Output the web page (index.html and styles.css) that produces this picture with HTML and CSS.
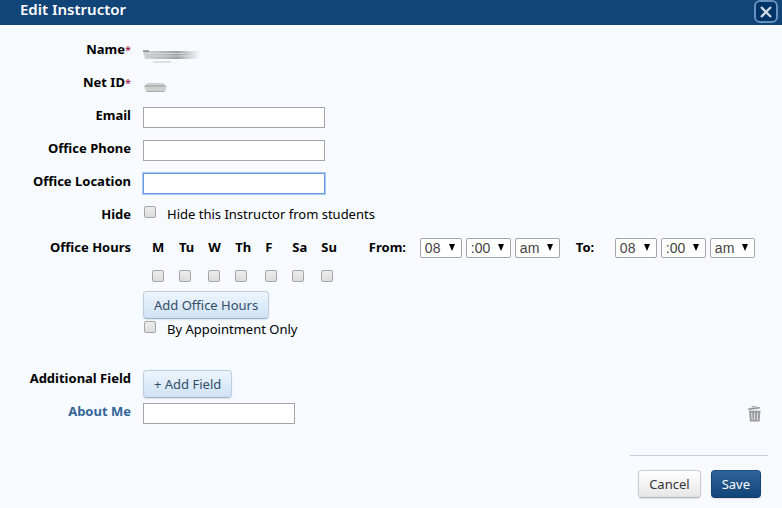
FILE: index.html
```html
<!DOCTYPE html>
<html lang="en">
	<head>
		<meta charset="UTF-8" />
		<meta name="viewport" content="width=device-width, initial-scale=1.0" />
		<title>Edit Instructor</title>
		<link rel="stylesheet" href="styles.css">
	</head>
	<body>
		<header class="title-bar">
			<h1>Edit Instructor</h1>
			<button type="button" class="close-btn" aria-label="Close">
				<svg width="12" height="12" viewBox="0 0 12 12">
					<path d="M1 1 L11 11 M11 1 L1 11" stroke="#ccd8e2" stroke-width="2.4" fill="none" />
				</svg>
			</button>
		</header>

		<form class="instructor-form">
			<div class="row">
				<div class="label">Name<span class="required">*</span></div>
				<div class="field">
					<svg class="redacted" width="66" height="16" viewBox="0 0 66 16" aria-hidden="true">
						<defs>
							<linearGradient id="fade" gradientUnits="userSpaceOnUse" x1="0" x2="58">
								<stop offset="0" stop-color="#bbb" stop-opacity="0.6" />
								<stop offset="0.6" stop-color="#888" stop-opacity="0.8" />
								<stop offset="1" stop-color="#aaa" stop-opacity="0" />
							</linearGradient>
							<filter id="smudge" x="-10%" y="-30%" width="120%" height="160%">
								<feGaussianBlur stdDeviation="0.5" />
							</filter>
						</defs>
						<g filter="url(#smudge)">
							<path d="M0 2 H58 L54 10 H2 Z" fill="url(#fade)" />
							<path d="M4 4.500 H40 M10 7 H52" stroke="#ddd" stroke-width="0.8" />
							<path d="M10 13 H28" stroke="#c4c4c4" stroke-width="1" />
						</g>
						<path d="M0 2 H6" stroke="#555" stroke-width="1" />
					</svg>
				</div>
			</div>

			<div class="row">
				<div class="label">Net ID<span class="required">*</span></div>
				<div class="field">
					<svg class="redacted" width="66" height="16" viewBox="0 0 66 16" aria-hidden="true">
						<g filter="url(#smudge)">
							<path d="M5 1 H20 L24 4 L22 10 H3 L1 4 Z" fill="#ced0d0" />
							<path d="M2 4 H22" stroke="#999" stroke-width="1" />
							<path d="M4 9.500 H21" stroke="#aaa" stroke-width="1" />
						</g>
					</svg>
				</div>
			</div>

			<div class="row">
				<label class="label" for="email">Email</label>
				<div class="field"><input type="text" id="email" class="text-input" /></div>
			</div>

			<div class="row">
				<label class="label" for="phone">Office Phone</label>
				<div class="field"><input type="text" id="phone" class="text-input" /></div>
			</div>

			<div class="row">
				<label class="label" for="location">Office Location</label>
				<div class="field"><input type="text" id="location" class="text-input active" /></div>
			</div>

			<div class="row">
				<div class="label">Hide</div>
				<div class="field check-field">
					<input type="checkbox" id="hide" class="checkbox" />
					<label for="hide">Hide this Instructor from students</label>
				</div>
			</div>

			<div class="row">
				<div class="label">Office Hours</div>
				<div class="field">
					<div class="hours">
						<table class="days">
							<tr>
								<th id="mon">M</th>
								<th id="tue">Tu</th>
								<th id="wed">W</th>
								<th id="thu">Th</th>
								<th id="fri">F</th>
								<th id="sat">Sa</th>
								<th id="sun">Su</th>
							</tr>
							<tr>
								<td><input type="checkbox" class="checkbox" aria-labelledby="mon" /></td>
								<td><input type="checkbox" class="checkbox" aria-labelledby="tue" /></td>
								<td><input type="checkbox" class="checkbox" aria-labelledby="wed" /></td>
								<td><input type="checkbox" class="checkbox" aria-labelledby="thu" /></td>
								<td><input type="checkbox" class="checkbox" aria-labelledby="fri" /></td>
								<td><input type="checkbox" class="checkbox" aria-labelledby="sat" /></td>
								<td><input type="checkbox" class="checkbox" aria-labelledby="sun" /></td>
							</tr>
						</table>

						<div class="time">
							<label class="time-label" for="from-hour">From:</label>
							<select id="from-hour" class="select hour"><option>08</option></select>
							<select class="select" aria-label="From minutes"><option>:00</option></select>
							<select class="select" aria-label="From am or pm"><option>am</option><option>pm</option></select>
						</div>

						<div class="time">
							<label class="time-label to" for="to-hour">To:</label>
							<select id="to-hour" class="select hour"><option>08</option></select>
							<select class="select" aria-label="To minutes"><option>:00</option></select>
							<select class="select" aria-label="To am or pm"><option>am</option><option>pm</option></select>
						</div>
					</div>

					<button type="button" class="btn btn-add">Add Office Hours</button>
					<div class="check-field appointment">
						<input type="checkbox" id="appointment" class="checkbox" />
						<label for="appointment">By Appointment Only</label>
					</div>
				</div>
			</div>

			<div class="row additional">
				<div class="label">Additional Field</div>
				<div class="field"><button type="button" class="btn btn-add">+ Add Field</button></div>
			</div>

			<div class="row">
				<label class="label custom" for="about">About Me</label>
				<div class="field custom-field">
					<input type="text" id="about" class="text-input short" />
					<button type="button" class="trash-btn" aria-label="Delete field">
						<svg width="13" height="16" viewBox="0 0 13 16">
							<path d="M0 2.500 L11.500 0.800 L12 2.500 L0.300 4.200 Z" fill="#999" />
							<path d="M4 1.800 L4.300 0.600 L7.500 0.200 L8 1.200" stroke="#999" fill="none" />
							<path d="M1 4.800 H12.500 L11.500 15.500 H2 Z" fill="#999" />
							<path d="M3.700 6.500 L4.200 14 M6.700 6.500 V14 M9.800 6.500 L9.300 14" stroke="#e4e8ec" stroke-width="1" />
						</svg>
					</button>
				</div>
			</div>

			<div class="actions">
				<button type="button" class="btn btn-cancel">Cancel</button>
				<button type="submit" class="btn btn-save">Save</button>
			</div>
		</form>
	</body>
</html>
```
FILE: styles.css
```css
* {
	box-sizing: border-box;
}

body {
	margin: 0;
	background-color: #f7fbff;
	color: #000;
	font-family: 'Noto Sans', 'Open Sans', sans-serif;
	font-size: 13px;
	line-height: 18px;
}

button,
input {
	font-family: inherit;
	font-size: inherit;
	line-height: inherit;
}

.title-bar {
	display: flex;
	justify-content: space-between;
	height: 25px;
	padding: 0 4px 0 20px;
	background-color: #114477;
}

h1 {
	margin: 0;
	color: #fff;
	font-size: 15px;
	font-weight: 600;
	line-height: 18px;
}

.close-btn {
	display: flex;
	align-items: center;
	justify-content: center;
	width: 24px;
	height: 23px;
	padding: 0;
	background-color: #003366;
	border: 2px solid #6690bd;
	border-radius: 6px;
	cursor: pointer;
}

.instructor-form {
	padding: 15px 14px 10px 0;
}

.row {
	display: flex;
	gap: 12px;
	min-height: 33px;
}

.label {
	flex: 0 0 131px;
	text-align: right;
	font-weight: 700;
}

.label.custom {
	color: #336699;
}

.required {
	color: #990033;
	font-size: 11px;
	font-weight: 400;
}

.field {
	flex: 1;
}

.redacted {
	display: block;
	margin-top: 9px;
}

.text-input {
	display: block;
	width: 182px;
	height: 21px;
	margin: 1px 0 0;
	padding: 0 4px;
	background-color: #fff;
	border: 1px solid #a5a5a5;
}

.text-input.short {
	width: 152px;
}

.text-input.active,
.text-input:focus {
	border-color: #6b9ae0;
	outline: 1px solid #a9c8f4;
}

.check-field {
	display: flex;
	gap: 10px;
}

.checkbox {
	appearance: none;
	flex: none;
	display: block;
	width: 12px;
	height: 12px;
	margin: 1px;
	background: linear-gradient(#ededed, #dcdcdc);
	border: 1px solid #a5a5a5;
	border-radius: 2px;
}

.checkbox:checked {
	background: #336699;
}

/* Office hours */
.hours {
	display: flex;
	align-items: flex-start;
	flex-wrap: wrap;
	gap: 16px;
}

.days {
	margin-left: 8px;
	border-collapse: collapse;
}

.days th,
.days td {
	padding: 0 13px 0 0;
	text-align: left;
	font-weight: 700;
}

.days th {
	height: 31px;
	padding-left: 1px;
	vertical-align: top;
}

.days td {
	height: 22px;
	vertical-align: top;
}

.time {
	display: flex;
	gap: 4px;
}

.time-label {
	width: 47px;
	margin-left: 3px;
	font-weight: 700;
}

.time-label.to {
	width: 35px;
	margin-left: 0;
}

.select {
	appearance: none;
	width: 45px;
	height: 20px;
	padding: 0 4px;
	background: #fff url("data:image/svg+xml,%3Csvg xmlns='http://www.w3.org/2000/svg' width='6' height='7'%3E%3Cpath d='M0 0H6L3 7Z'/%3E%3C/svg%3E") no-repeat right 6px top 5px;
	border: 1px solid #a5a5a5;
	border-radius: 2px;
	color: #444;
	font-family: 'Liberation Sans', Arial, sans-serif;
	font-size: 14px;
}

.select.hour {
	width: 42px;
}

/* Buttons */
.btn {
	display: block;
	height: 28px;
	padding: 0 10px;
	border: 1px solid;
	border-radius: 4px;
	box-shadow: 0 1px 2px rgba(0, 0, 0, 0.1);
	cursor: pointer;
}

.btn-add {
	background: linear-gradient(#edf5fd, #cfe2f5);
	border-color: #bccddc #bccddc #9fb4c8;
	color: #334d66;
}

.btn-cancel {
	background: linear-gradient(#fff, #e6e6e6);
	border-color: #ccc #ccc #b3b3b3;
	color: #333;
}

.btn-save {
	background: linear-gradient(#306398, #114477);
	border-color: #1d4f82 #114477 #0d3a66;
	color: #fff;
}

.appointment {
	margin-top: 1px;
}

.additional {
	margin-top: 31px;
}

.additional .btn {
	margin-top: 1px;
}

.custom-field {
	display: flex;
	align-items: flex-start;
	justify-content: space-between;
}

.trash-btn {
	margin: 4px 7px 0 0;
	padding: 0;
	background: none;
	border: none;
	cursor: pointer;
}

.trash-btn svg {
	display: block;
}

.actions {
	display: flex;
	justify-content: flex-end;
	gap: 10px;
	width: 138px;
	margin: 20px 0 0 auto;
	padding: 14px 7px 0 0;
	border-top: 1px solid #c8cdd1;
}
```
